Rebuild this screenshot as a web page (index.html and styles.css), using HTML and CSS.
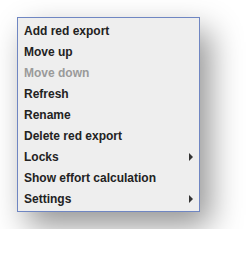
FILE: index.html
```html
<!DOCTYPE html>
<html lang="en">
<head>
    <meta charset="UTF-8">
    <title>Context menu</title>
    <link rel="stylesheet" href="styles.css">
</head>
<body>
    <ul class="context-menu">
        <li class="menu-item">Add red export</li>
        <li class="menu-item">Move up</li>
        <li class="menu-item disabled">Move down</li>
        <li class="menu-item">Refresh</li>
        <li class="menu-item">Rename</li>
        <li class="menu-item">Delete red export</li>
        <li class="menu-item submenu">Locks</li>
        <li class="menu-item">Show effort calculation</li>
        <li class="menu-item submenu">Settings</li>
    </ul>
</body>
</html>
```

FILE: styles.css
```css
body {
    margin: 0;
    padding: 17px;
    background: #fff;
    font-family: 'Liberation Sans', Arial, sans-serif;
}

.context-menu {
    list-style: none;
    margin: 0;
    padding: 2px 0;
    width: 181px;
    box-sizing: content-box;
    background: #eeeeee;
    border: 1px solid #6f86c2;
    box-shadow: 10px 14px 30px rgba(0, 0, 0, 0.42);
}

.menu-item {
    display: flex;
    align-items: center;
    justify-content: space-between;
    height: 21px;
    padding: 1px 6px 0;
    box-sizing: border-box;
    font-size: 12px;
    font-weight: bold;
    color: #222;
}

.menu-item.disabled {
    color: #9a9a9a;
}

.menu-item.submenu::after {
    content: "";
    width: 0;
    height: 0;
    border-top: 4px solid transparent;
    border-bottom: 4px solid transparent;
    border-left: 4px solid #333;
}
```
